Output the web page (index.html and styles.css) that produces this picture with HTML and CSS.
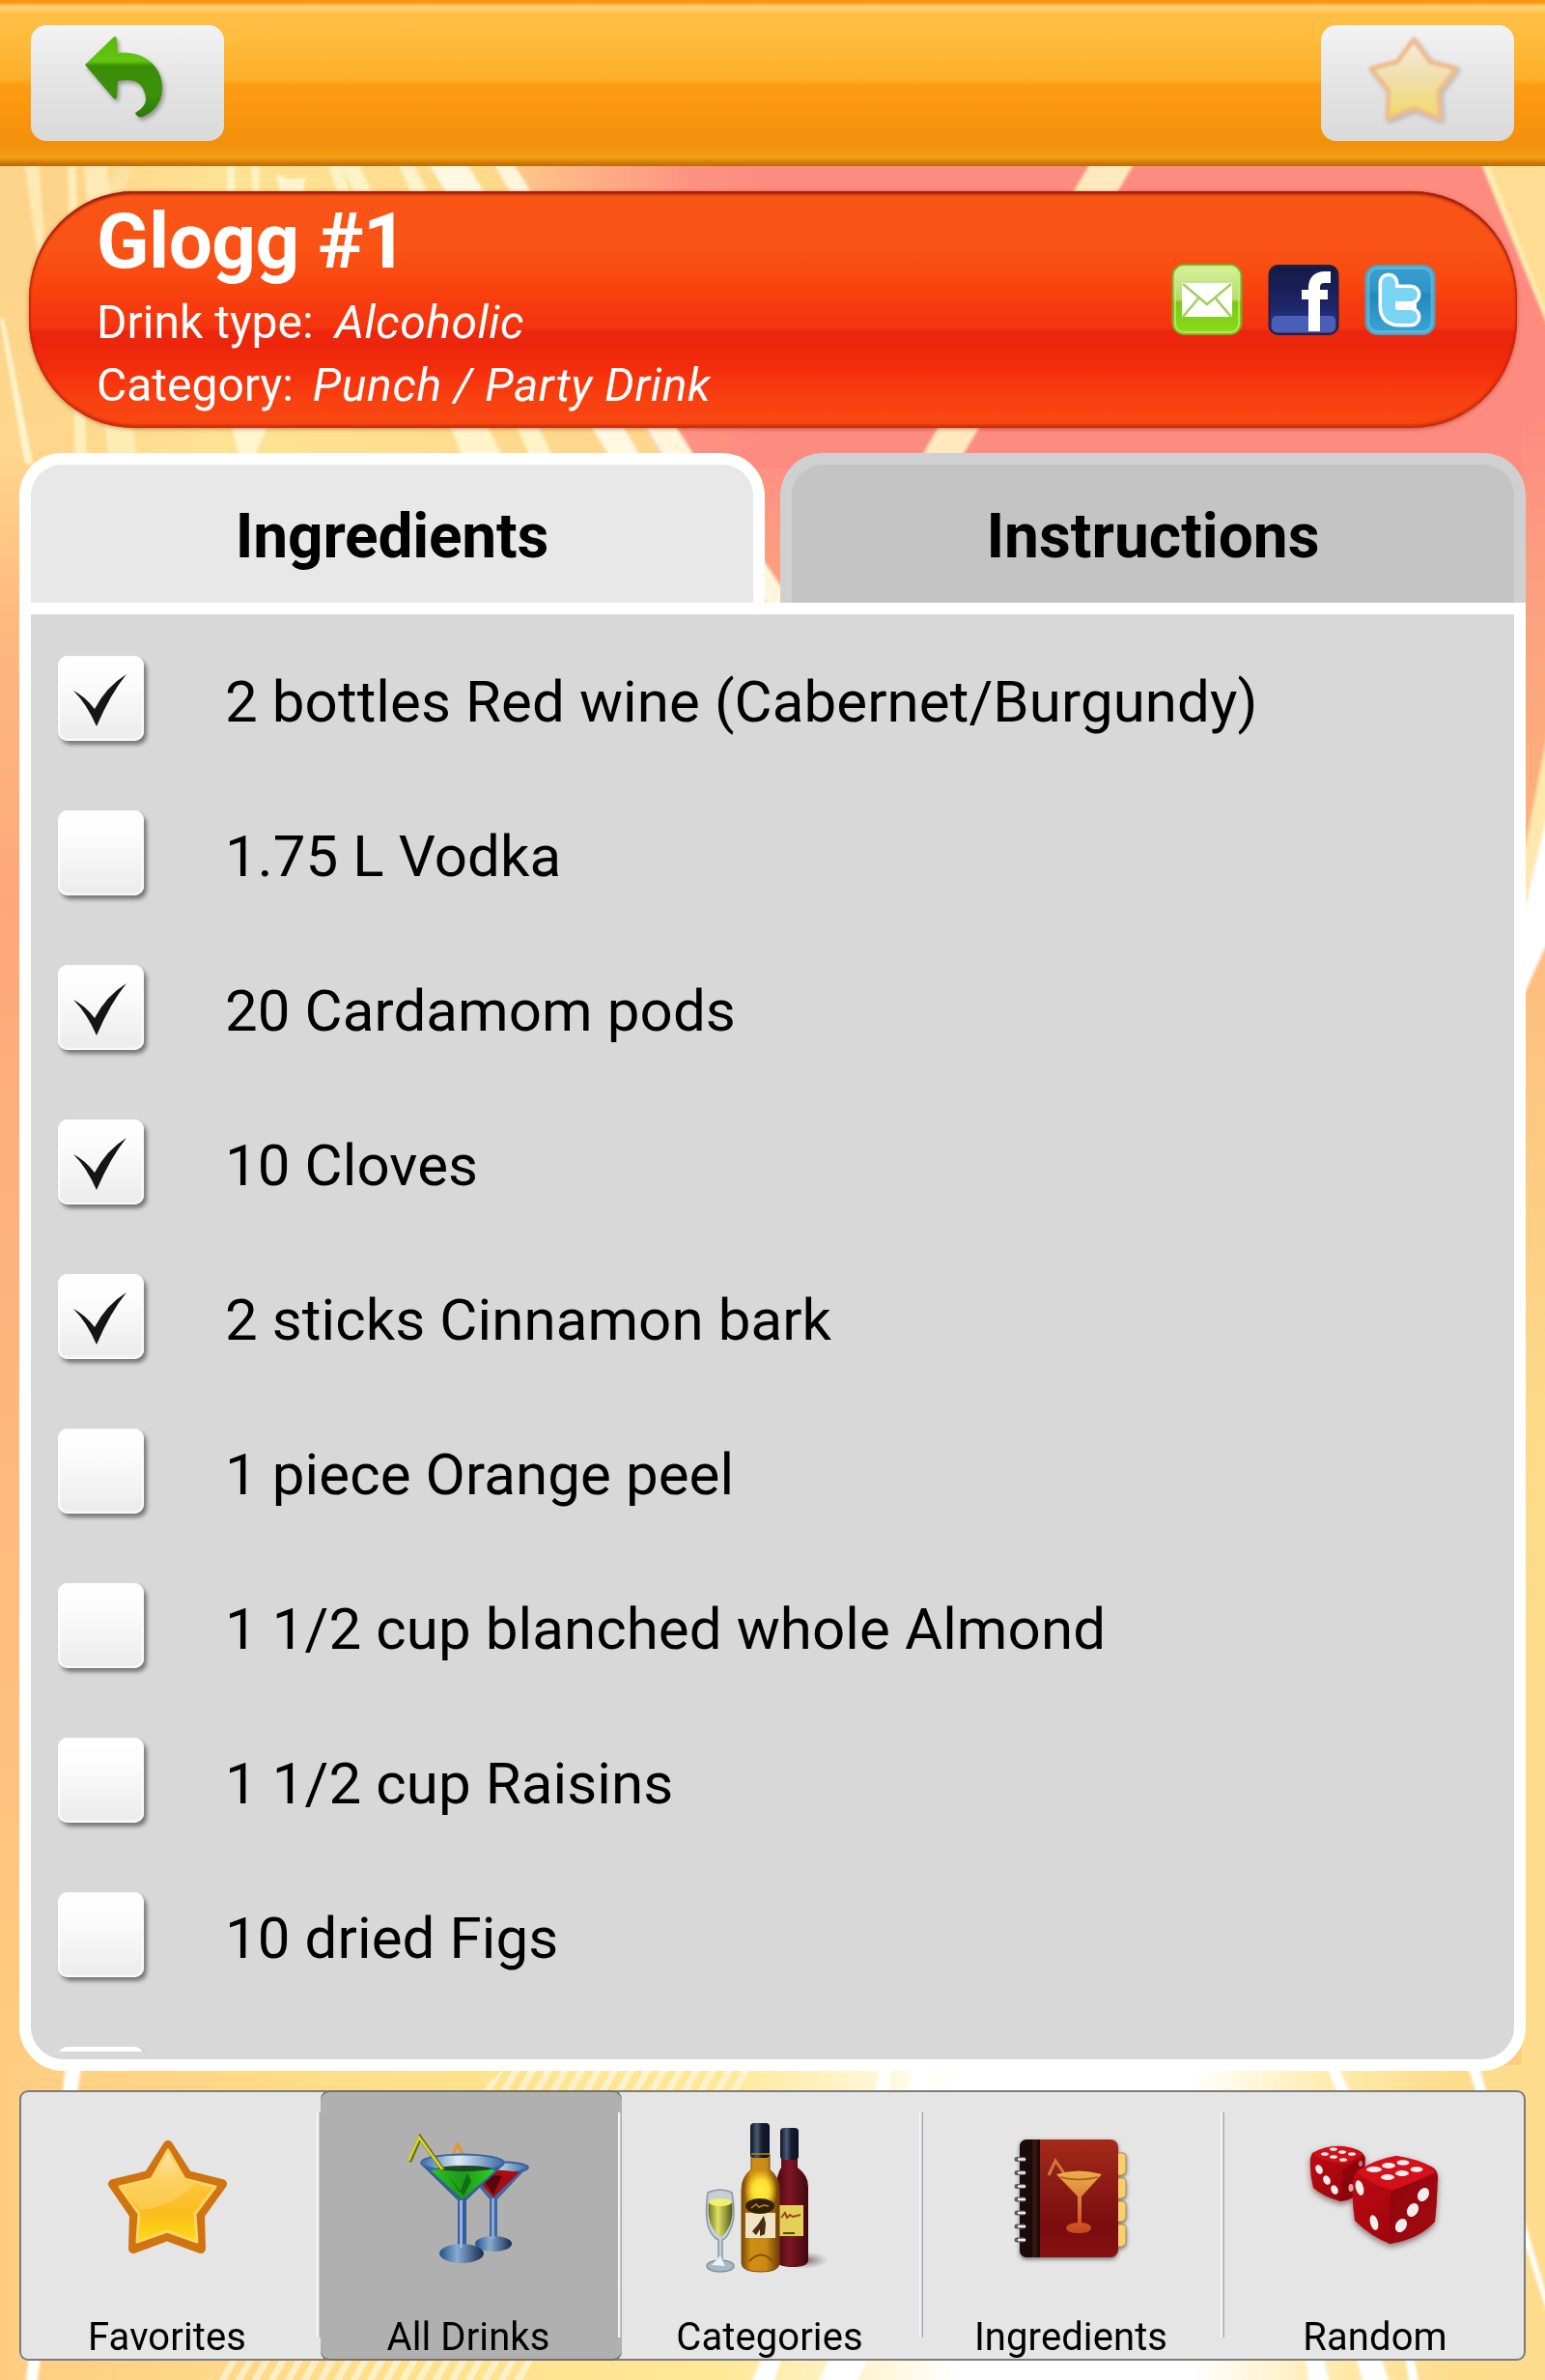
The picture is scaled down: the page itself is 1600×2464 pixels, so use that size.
FILE: index.html
```html
<!DOCTYPE html>
<html lang="en">
<head>
<meta charset="utf-8">
<title>Glogg #1</title>
<link rel="stylesheet" href="styles.css">
</head>
<body>
<svg class="backdrop" viewBox="0 0 1600 2464" preserveAspectRatio="none" aria-hidden="true">
  <defs>
    <linearGradient id="warm" x1="0" y1="0" x2="0" y2="1">
      <stop offset=".07" stop-color="#fdd38a"/><stop offset=".19" stop-color="#fed68c"/><stop offset=".26" stop-color="#feb97e"/><stop offset=".38" stop-color="#fea87a"/><stop offset=".6" stop-color="#feb77c"/><stop offset=".86" stop-color="#fecc80"/><stop offset="1" stop-color="#fed88a"/>
    </linearGradient>
    <linearGradient id="glow" x1="0" y1="0" x2="1" y2="0">
      <stop offset="0" stop-color="#ffe696" stop-opacity="0"/><stop offset=".3" stop-color="#ffe696" stop-opacity=".8"/><stop offset=".7" stop-color="#ffe08e" stop-opacity=".7"/><stop offset="1" stop-color="#ffe08e" stop-opacity="0"/>
    </linearGradient>
    <linearGradient id="pinkX" gradientUnits="userSpaceOnUse" x1="490" y1="0" x2="790" y2="0">
      <stop offset="0" stop-color="#fba583" stop-opacity=".1"/><stop offset=".4" stop-color="#fda084" stop-opacity=".7"/><stop offset=".75" stop-color="#fe9282"/><stop offset="1" stop-color="#fe8b80"/>
    </linearGradient>
    <linearGradient id="right" x1="0" y1="0" x2="0" y2="1">
      <stop offset="0" stop-color="#fe8b80"/><stop offset=".2" stop-color="#fe8b80"/><stop offset=".28" stop-color="#fb9f80"/><stop offset=".38" stop-color="#fdae7c"/><stop offset=".52" stop-color="#fdc680"/><stop offset=".7" stop-color="#fddb8b"/><stop offset="1" stop-color="#fddc8e"/>
    </linearGradient>
    <linearGradient id="floor" x1="0" y1="0" x2="1" y2="0">
      <stop offset="0" stop-color="#ffcd82"/><stop offset=".1" stop-color="#ffd487"/><stop offset=".25" stop-color="#ffe08a"/><stop offset=".47" stop-color="#ffe898"/><stop offset=".56" stop-color="#fff5d2"/><stop offset=".62" stop-color="#fff"/><stop offset=".77" stop-color="#fff"/><stop offset=".87" stop-color="#ffe9a8"/><stop offset=".94" stop-color="#fddc8c"/><stop offset="1" stop-color="#fddc8e"/>
    </linearGradient>
    <linearGradient id="gapFill" x1="0" y1="0" x2="0" y2="1"><stop offset="0" stop-color="#fe9182"/><stop offset="1" stop-color="#fba47f"/></linearGradient>
    <pattern id="hatch" width="17" height="40" patternUnits="userSpaceOnUse" patternTransform="skewX(-30)"><rect width="8" height="40" fill="#fff" opacity=".5"/></pattern>
    <filter id="soft"><feGaussianBlur stdDeviation="1.6"/></filter>
  </defs>
  <rect width="1600" height="2464" fill="url(#warm)"/>
  <rect x="60" y="0" width="560" height="600" fill="url(#glow)"/>
  <polygon points="480,100 1600,100 1600,700 810,700" fill="url(#pinkX)"/>
  <rect x="780" y="485" width="40" height="150" fill="url(#gapFill)"/>
  <rect x="1576" y="0" width="24" height="2140" fill="url(#right)"/>
  <rect y="2138" width="1600" height="326" fill="url(#floor)"/>
  <g filter="url(#soft)" fill="#fff6cf">
    <polygon points="24,160 40,160 50,300 44,300" opacity=".6"/>
    <polygon points="0,330 4,330 34,480 26,480"/>
    <polygon points="70,160 78,160 90,480 78,480" opacity=".7"/>
    <polygon points="86,160 110,160 142,480 112,480" opacity=".6"/>
    <polygon points="124,160 142,160 124,210 108,210" opacity=".3"/>
    <polygon points="235,160 243,160 243,210 235,210" opacity=".9"/>
    <polygon points="260,160 268,160 268,210 262,210" opacity=".9"/>
    <polygon points="286,180 300,186 316,184 314,200 290,200"/>
    <polygon points="240,440 278,440 262,475 248,475"/>
    <polygon points="335,160 352,160 362,200 350,200" opacity=".8"/>
    <polygon points="350,160 366,160 524,480 482,480" opacity=".9"/>
    <polygon points="408,160 424,160 576,480 552,480" opacity=".9"/>
    <polygon points="438,160 478,160 668,480 636,480" fill="#fff9e2"/>
    <polygon points="506,160 526,160 724,480 812,612 812,650 790,620 690,480" fill="#fff6dc"/>
    <polygon points="1134,160 1180,160 992,480 950,480" fill="#ffe9bd"/>
    <polygon points="1530,160 1610,160 1610,350" fill="#ffdc94"/>
    <polygon points="1530,160 1538,160 1610,345 1610,356" fill="#ffedae"/>
    <polygon points="1610,720 1575,900 1575,1040 1610,950" fill="#ffe7ae"/>
    <polygon points="1610,810 1575,960 1575,1036 1610,960" fill="#fff"/>
    <polygon points="68,2140 84,2140 38,2470 26,2470" fill="#fff"/>
    <polygon points="1374,2140 1386,2140 1400,2170 1386,2170" fill="#fff"/>
    <polygon points="1520,2140 1532,2140 1610,2405 1604,2400" fill="#fff"/>
    <polygon points="1352,2440 1370,2440 1378,2470 1356,2470" fill="#fff"/>
    <polygon points="1404,2440 1430,2440 1440,2470 1412,2470" fill="#fff"/>
    <polygon points="1455,2440 1464,2440 1470,2470 1460,2470" fill="#fff"/>
    <polygon points="912,2140 922,2140 922,2170 905,2170" fill="#fff"/>
    <polygon points="945,2140 965,2140 965,2170 938,2170" fill="#fff"/>
    <polygon points="790,2440 810,2440 800,2470 776,2470" fill="#fff"/>
    <polygon points="860,2440 900,2440 885,2470 845,2470" fill="#fff"/>
  </g>
  <polygon points="520,2144 786,2144 770,2170 490,2170" fill="url(#hatch)"/>
  <polygon points="240,2440 560,2440 545,2464 215,2464" fill="url(#hatch)"/>
</svg>

<header class="topbar">
  <button class="bar-btn" aria-label="Back">
    <svg viewBox="32 26 200 120">
      <defs><linearGradient id="arrow" x1="0" y1="38" x2="0" y2="122" gradientUnits="userSpaceOnUse"><stop offset="0" stop-color="#5db50f"/><stop offset=".3" stop-color="#62c60e"/><stop offset=".36" stop-color="#3a8d07"/><stop offset=".7" stop-color="#3d910b"/><stop offset="1" stop-color="#277a03"/></linearGradient></defs>
      <path class="arrow" d="M88 67 L117 39 Q120 36 121 40 L122 55 C147 52 168 67 168 91 C168 107 158 117 147 121 Q142 122 140 117 C149 111 153 106 150 97 C147 84 137 81 122 84 L121 100 Q120 105 116 100 Z" fill="url(#arrow)"/>
    </svg>
  </button>
  <button class="bar-btn" aria-label="Favorite">
    <svg viewBox="1368 26 200 120">
      <defs><linearGradient id="pale" x1="0" y1="0" x2="0" y2="1"><stop offset="0" stop-color="#f4ece0"/><stop offset=".5" stop-color="#f0deaa"/><stop offset="1" stop-color="#f2da62"/></linearGradient></defs>
      <path class="star-shadow" d="M1464 41 L1481 64 L1508 71 L1490 94 L1491 123 L1464 112 L1437 123 L1438 94 L1420 71 L1447 64 Z" fill="url(#pale)" stroke="#efbd90" stroke-width="5" stroke-linejoin="round"/>
    </svg>
  </button>
</header>

<section class="banner">
  <div class="drink">
    <h1 class="drink-name">Glogg #1</h1>
    <p class="meta"><span>Drink type:</span><em class="type">Alcoholic</em></p>
    <p class="meta"><span>Category:</span><em class="cat">Punch / Party Drink</em></p>
  </div>
  <div class="share">
    <svg viewBox="0 0 74 74">
      <defs><linearGradient id="lime" x1="0" y1="0" x2="0" y2="1"><stop offset="0" stop-color="#d9f3a0"/><stop offset=".5" stop-color="#b4dc6c"/><stop offset=".54" stop-color="#7bc814"/><stop offset="1" stop-color="#88dc1c"/></linearGradient></defs>
      <rect x="1.5" y="1" width="71" height="72" rx="12" fill="url(#lime)" stroke="#7fae22" stroke-width="2"/>
      <rect x="4" y="4" width="66" height="67" rx="9" fill="none" stroke="#c8f07a" stroke-width="2" opacity=".7"/>
      <rect x="11" y="20" width="52" height="35" fill="#fff"/>
      <path d="M12 21 L37 42 L62 21 M12 55 L28 36 M62 55 L46 36" fill="none" stroke="#a3cf5c" stroke-width="2.6"/>
    </svg>
    <svg viewBox="0 0 74 74">
      <defs><linearGradient id="navy" x1="0" y1="0" x2="0" y2="1"><stop offset="0" stop-color="#141a45"/><stop offset=".5" stop-color="#1b2260"/><stop offset="1" stop-color="#2b3b98"/></linearGradient></defs>
      <rect x="1.5" y="2" width="71" height="71" rx="9" fill="url(#navy)" stroke="#22203f" stroke-width="2"/>
      <rect x="4" y="54" width="66" height="17" rx="5" fill="#4a5fb8"/>
      <path d="M48 70 V25 Q48 14 59 14 H65" fill="none" stroke="#fff" stroke-width="12"/>
      <path d="M35 32 H62" fill="none" stroke="#fff" stroke-width="10"/>
    </svg>
    <svg viewBox="0 0 74 74">
      <defs><linearGradient id="sky" x1="0" y1="0" x2="0" y2="1"><stop offset="0" stop-color="#3a9fd0"/><stop offset=".38" stop-color="#2f93c6"/><stop offset=".42" stop-color="#2488bd"/><stop offset="1" stop-color="#3aa4d4"/></linearGradient></defs>
      <rect x="1.5" y="2" width="71" height="71" rx="12" fill="url(#sky)" stroke="#5a9db8" stroke-width="2"/>
      <rect x="4" y="4.500" width="66" height="66" rx="10" fill="none" stroke="#62bfe2" stroke-width="3" opacity=".7"/>
      <g fill="none" stroke-linecap="round" stroke-linejoin="round">
        <path d="M25 20 V44 Q25 55 36 55 H48 M27 32 H48" stroke="#fff" stroke-width="21"/>
        <path d="M25 20 V44 Q25 55 36 55 H48 M27 32 H48" stroke="#7ad4f4" stroke-width="14"/>
        <path d="M35 43.500 H54" stroke="#fff" stroke-width="8" stroke-linecap="butt"/>
      </g>
    </svg>
  </div>
</section>

<main class="recipe">
  <div class="tabs">
    <button class="tab active">Ingredients</button>
    <button class="tab">Instructions</button>
  </div>
  <div class="panel">
    <ul class="list">
      <li class="row"><span class="box checked"><svg viewBox="0 0 88 88"><path d="M16 36 Q28 42 38 55 Q50 32 71 19 Q54 40 40 73 Q30 50 16 36 Z"/></svg></span><span>2 bottles Red wine (Cabernet/Burgundy)</span></li>
      <li class="row"><span class="box"></span><span>1.75 L Vodka</span></li>
      <li class="row"><span class="box checked"><svg viewBox="0 0 88 88"><path d="M16 36 Q28 42 38 55 Q50 32 71 19 Q54 40 40 73 Q30 50 16 36 Z"/></svg></span><span>20 Cardamom pods</span></li>
      <li class="row"><span class="box checked"><svg viewBox="0 0 88 88"><path d="M16 36 Q28 42 38 55 Q50 32 71 19 Q54 40 40 73 Q30 50 16 36 Z"/></svg></span><span>10 Cloves</span></li>
      <li class="row"><span class="box checked"><svg viewBox="0 0 88 88"><path d="M16 36 Q28 42 38 55 Q50 32 71 19 Q54 40 40 73 Q30 50 16 36 Z"/></svg></span><span>2 sticks Cinnamon bark</span></li>
      <li class="row"><span class="box"></span><span>1 piece Orange peel</span></li>
      <li class="row"><span class="box"></span><span>1 1/2 cup blanched whole Almond</span></li>
      <li class="row"><span class="box"></span><span>1 1/2 cup Raisins</span></li>
      <li class="row"><span class="box"></span><span>10 dried Figs</span></li>
      <li class="row"><span class="box"></span></li>
    </ul>
  </div>
</main>

<nav class="nav">
  <a class="item">
    <svg viewBox="20 2166 312 230">
      <defs><linearGradient id="gold" x1="0" y1="0" x2="0" y2="1"><stop offset="0" stop-color="#fde0a0"/><stop offset=".35" stop-color="#fdc53a"/><stop offset=".7" stop-color="#fbbd1e"/><stop offset="1" stop-color="#ffdc10"/></linearGradient></defs>
      <path d="M174 2221 L194 2252 L230 2261 L207 2293 L208 2328 L173 2315 L138 2328 L139 2293 L117 2261 L154 2252 Z" fill="#d97c12" stroke="#cf7410" stroke-width="10" stroke-linejoin="round"/>
      <path d="M174 2226 L191 2256 L223 2264 L202 2292 L204 2321 L173 2310 L142 2321 L144 2292 L124 2264 L157 2256 Z" fill="url(#gold)" stroke="#fbd565" stroke-width="3" stroke-linejoin="round"/>
      <path d="M126 2265 L158 2258 L174 2230 L190 2258 L202 2261 Q180 2284 146 2288 Z" fill="#fff" opacity=".18"/>
    </svg>
    <span>Favorites</span>
  </a>
  <a class="item selected">
    <svg viewBox="332 2166 312 230">
      <defs>
        <linearGradient id="steel" x1="0" y1="0" x2="1" y2="0"><stop offset="0" stop-color="#3d6fa8"/><stop offset=".45" stop-color="#dcebf6"/><stop offset="1" stop-color="#3a68a6"/></linearGradient>
        <linearGradient id="base" x1="0" y1="0" x2="1" y2="0"><stop offset="0" stop-color="#274f88"/><stop offset=".4" stop-color="#86acd2"/><stop offset="1" stop-color="#16294c"/></linearGradient>
        <linearGradient id="lime2" x1="0" y1="0" x2="1" y2="0"><stop offset="0" stop-color="#2cc424"/><stop offset=".5" stop-color="#1b9a17"/><stop offset="1" stop-color="#35cf2a"/></linearGradient>
      </defs>
      <path d="M467 2234 L474 2220 L481 2234" fill="none" stroke="#e8942a" stroke-width="3"/>
      <path d="M478 2243 L547 2243 L515 2277 V2318 H507 V2277 Z" fill="#3f689e"/>
      <ellipse cx="513" cy="2244" rx="34" ry="6" fill="url(#steel)" stroke="#345f9b" stroke-width="2"/>
      <path d="M487 2249 Q512 2244 538 2249 L511 2275 Z" fill="#a90d14"/><path d="M496 2251 L520 2253 L511 2272 Z" fill="#5c0508"/>
      <ellipse cx="511" cy="2323" rx="19" ry="8" fill="url(#base)"/>
      <path d="M509 2276 h3 v42 h-3z" fill="#86a9d4"/>
      <path d="M436 2241 L522 2241 L483 2278 V2326 H474 V2278 Z" fill="#355f9a"/>
      <ellipse cx="479" cy="2239" rx="43" ry="8.500" fill="url(#steel)" stroke="#3b67a3" stroke-width="2"/>
      <path d="M446 2247 Q479 2240 513 2247 L479 2277 Z" fill="url(#lime2)"/>
      <ellipse cx="481" cy="2245" rx="27" ry="3" fill="#1d4a20"/>
      <path d="M464 2252 L476 2270 L484 2250 L488 2258 L480 2273 Z" fill="#126d10"/>
      <path d="M424 2238 L435 2213 L459 2247" fill="none" stroke="#6c7016" stroke-width="4.500"/><path d="M423 2237 L434 2213 L458 2246" fill="none" stroke="#d9d62c" stroke-width="2.500"/>
      <ellipse cx="478" cy="2333" rx="23" ry="10" fill="url(#base)"/>
      <path d="M476 2278 h3 v49 h-3z" fill="#94b5dc"/>
    </svg>
    <span>All Drinks</span>
  </a>
  <a class="item">
    <svg viewBox="644 2166 312 230">
      <defs>
        <linearGradient id="amber" x1="0" y1="0" x2="1" y2="0"><stop offset="0" stop-color="#7a4806"/><stop offset=".25" stop-color="#d08e12"/><stop offset=".65" stop-color="#c98a16"/><stop offset="1" stop-color="#6c3c05"/></linearGradient>
        <linearGradient id="claret" x1="0" y1="0" x2="1" y2="0"><stop offset="0" stop-color="#4a0812"/><stop offset=".4" stop-color="#7e1622"/><stop offset="1" stop-color="#400610"/></linearGradient>
        <linearGradient id="cap" x1="0" y1="0" x2="1" y2="0"><stop offset="0" stop-color="#0c1220"/><stop offset=".35" stop-color="#4b5a76"/><stop offset=".6" stop-color="#151c2e"/><stop offset="1" stop-color="#0c1220"/></linearGradient>
        <radialGradient id="shine"><stop offset="0" stop-color="#ffec40"/><stop offset=".5" stop-color="#fde030"/><stop offset="1" stop-color="#f8d820" stop-opacity="0"/></radialGradient>
        <linearGradient id="fizz" x1="0" y1="0" x2="1" y2="0"><stop offset="0" stop-color="#74761a"/><stop offset=".4" stop-color="#dfe168"/><stop offset="1" stop-color="#55581a"/></linearGradient>
        <radialGradient id="shade"><stop offset="0" stop-color="#402028" stop-opacity=".7"/><stop offset="1" stop-color="#806060" stop-opacity="0"/></radialGradient>
      </defs>
      <ellipse cx="832" cy="2340" rx="26" ry="9" fill="url(#shade)"/>
      <path d="M809 2230 H826 V2244 Q837 2252 837 2264 V2340 Q837 2347 821 2347 Q804 2347 804 2340 V2264 Q804 2252 809 2244 Z" fill="url(#claret)"/>
      <rect x="808" y="2203" width="19" height="33" rx="4" fill="url(#cap)"/>
      <rect x="807" y="2283" width="25" height="32" fill="#e4cf58"/><path d="M809 2296 l4 -5 2 5 3 -3 3 2 8 -2" fill="none" stroke="#a04028" stroke-width="2"/><path d="M811 2312h12" stroke="#574318" stroke-width="2"/>
      <path d="M778 2230 H797 V2246 Q807 2254 807 2267 V2343 Q807 2352 788 2352 Q768 2352 768 2343 V2267 Q768 2254 778 2246 Z" fill="url(#amber)" stroke="#7a4a0a" stroke-width="1"/>
      <ellipse cx="788" cy="2268" rx="17" ry="22" fill="url(#shine)"/>
      <rect x="777" y="2198" width="20" height="36" rx="4" fill="url(#cap)"/><path d="M778 2230 H797" stroke="#b98524" stroke-width="1.500"/>
      <rect x="772" y="2291" width="31" height="26" fill="#efe4c4"/>
      <ellipse cx="787" cy="2284" rx="15" ry="8" fill="#35200a"/><path d="M778 2286 l5 -4 3 3 5 -2 5 1" fill="none" stroke="#bb8733" stroke-width="1.500"/>
      <path d="M791 2294 L785 2303 L779 2310 L783 2314 L787 2308 L787 2315 L792 2313 L793 2302 Z" fill="#4b2c12"/>
      <path d="M776 2341 Q788 2328 800 2341" fill="none" stroke="#8d4d0c" stroke-width="2"/>
      <path d="M733 2270 Q746 2264 758 2270 Q762 2292 758 2304 Q753 2318 748 2319 V2341 H744 V2319 Q737 2316 733 2304 Q730 2290 733 2270 Z" fill="#c5d0d8" stroke="#8797a2" stroke-width="1.500"/>
      <path d="M734 2279 Q746 2275 758 2279 Q761 2304 747 2316 Q731 2306 734 2279 Z" fill="url(#fizz)"/><ellipse cx="746" cy="2280" rx="12" ry="4" fill="#eff06e"/>
      <ellipse cx="746" cy="2346" rx="14" ry="6" fill="#a9bac6" stroke="#7d92a0" stroke-width="1.500"/><path d="M737 2345 L746 2335 L751 2346Z" fill="#eaf1f5"/>
    </svg>
    <span>Categories</span>
  </a>
  <a class="item">
    <svg viewBox="956 2166 312 230">
      <defs><linearGradient id="cover" x1="0" y1="0" x2="0" y2="1"><stop offset="0" stop-color="#a52a18"/><stop offset=".35" stop-color="#8e1c16"/><stop offset=".75" stop-color="#7a0c0f"/><stop offset="1" stop-color="#8a1010"/></linearGradient><linearGradient id="martini" x1="0" y1="0" x2="0" y2="1"><stop offset="0" stop-color="#eab04a"/><stop offset="1" stop-color="#c9441c"/></linearGradient></defs>
      <g class="book">
        <path d="M1150 2229 h13 q3 0 3 3 v17 l-4 3 h-12 z M1150 2255 h13 q3 0 3 3 v15 l-4 3 h-12 z M1150 2279 h13 q3 0 3 3 v15 l-4 3 h-12 z M1150 2303 h13 q3 0 3 3 v17 l-4 3 h-12 z" fill="#f8d070" stroke="#b98a42" stroke-width="1"/>
        <rect x="1056" y="2215" width="102" height="122" rx="8" fill="url(#cover)"/>
        <path d="M1064 2215 H1077 V2337 H1064 Q1056 2337 1056 2329 V2223 Q1056 2215 1064 2215 Z" fill="#1c0a08"/><path d="M1069 2215 h5 v122 h-5z" fill="#341511"/>
      </g>
      <g fill="none" stroke="#5a5a5a" stroke-width="5" stroke-linecap="round"><path d="M1053 2235.500h7M1053 2249.500h7M1053 2263.500h7M1053 2277h7M1053 2291h7M1053 2305h7M1053 2319h7"/><path stroke="#eee" stroke-width="2.500" d="M1055 2235.500h6M1055 2249.500h6M1055 2263.500h6M1055 2277h6M1055 2291h6M1055 2305h6M1055 2319h6"/></g>
      <path d="M1086 2252 L1093 2237 L1102 2250" fill="none" stroke="#d07a3a" stroke-width="3"/>
      <path d="M1094 2251 Q1117 2244 1141 2251 L1120 2274 V2301 Q1130 2302 1130 2307 Q1129 2312 1117 2312 Q1105 2312 1104 2307 Q1104 2302 1116 2301 V2274 Z" fill="url(#martini)"/>
      <path d="M1098 2254 Q1117 2259 1137 2254" fill="none" stroke="#b3561f" stroke-width="1.500"/>
    </svg>
    <span>Ingredients</span>
  </a>
  <a class="item">
    <svg viewBox="1268 2166 312 230">
      <defs><linearGradient id="dieL" x1="0" y1="0" x2="1" y2="1"><stop offset="0" stop-color="#c40a12"/><stop offset="1" stop-color="#8f040a"/></linearGradient><linearGradient id="dieR" x1="0" y1="0" x2="1" y2="1"><stop offset="0" stop-color="#8c050b"/><stop offset="1" stop-color="#a80a12"/></linearGradient></defs>
      <g class="dice">
        <path d="M1359 2229 Q1378 2219 1396 2223 Q1413 2226 1414 2235 L1412 2266 Q1400 2279 1388 2279 Q1370 2274 1360 2265 Q1356 2250 1357 2234 Z" fill="url(#dieL)"/>
        <path d="M1359 2230 Q1378 2219 1396 2223 L1412 2230 Q1396 2241 1389 2240 Q1372 2238 1359 2230Z" fill="#ce1018"/>
        <path d="M1391 2246 Q1400 2240 1413 2233 L1411 2266 Q1403 2276 1388 2279 Z" fill="#8b050b"/>
        <path d="M1408 2247 Q1425 2236 1446 2232 Q1468 2235 1484 2244 Q1490 2248 1489 2257 L1486 2300 Q1470 2318 1440 2323 Q1420 2316 1403 2299 Q1400 2280 1401 2260 Q1402 2250 1408 2247 Z" fill="url(#dieL)"/>
        <path d="M1405 2248 Q1425 2235 1446 2232 Q1470 2235 1487 2248 Q1474 2260 1440 2267 Q1418 2261 1405 2248 Z" fill="#d4101a"/>
        <path d="M1440 2272 Q1444 2266 1462 2260 Q1478 2253 1487 2249 Q1490 2270 1486 2298 Q1472 2316 1438 2323 Z" fill="url(#dieR)"/>
      </g>
      <g fill="#f6eeee">
        <ellipse cx="1372" cy="2230" rx="4" ry="1.800"/><ellipse cx="1381" cy="2225" rx="4" ry="1.800"/><ellipse cx="1390" cy="2228" rx="4" ry="1.800"/><ellipse cx="1400" cy="2230" rx="4" ry="1.800"/><ellipse cx="1381" cy="2233" rx="4" ry="1.800"/><ellipse cx="1391" cy="2236" rx="4" ry="1.800"/>
        <ellipse cx="1366" cy="2246" rx="3.500" ry="5" transform="rotate(-25 1366 2246)"/><ellipse cx="1374" cy="2257" rx="3.500" ry="5" transform="rotate(-25 1374 2257)"/><ellipse cx="1382" cy="2267" rx="3.500" ry="5" transform="rotate(-25 1382 2267)"/>
        <ellipse cx="1399" cy="2265" rx="2.500" ry="4" opacity=".7"/><ellipse cx="1409" cy="2240" rx="2" ry="3" opacity=".5"/>
        <ellipse cx="1423" cy="2246" rx="8" ry="3"/><ellipse cx="1438" cy="2242" rx="7" ry="3"/><ellipse cx="1453" cy="2239" rx="6.500" ry="2.800"/><ellipse cx="1437" cy="2254" rx="7" ry="3"/><ellipse cx="1452" cy="2250" rx="7" ry="3"/><ellipse cx="1467" cy="2246" rx="6.500" ry="2.800"/>
        <ellipse cx="1408" cy="2265" rx="4" ry="8" transform="rotate(-15 1408 2265)"/><ellipse cx="1423" cy="2301" rx="4" ry="8" transform="rotate(-15 1423 2301)"/>
        <ellipse cx="1474" cy="2272" rx="5.500" ry="7.500" transform="rotate(30 1474 2272)"/><ellipse cx="1463" cy="2288" rx="5.500" ry="7.500" transform="rotate(30 1463 2288)"/><ellipse cx="1451" cy="2304" rx="5.500" ry="7.500" transform="rotate(30 1451 2304)"/>
      </g>
    </svg>
    <span>Random</span>
  </a>
</nav>
</body>
</html>
```
FILE: styles.css
```css
* { box-sizing: border-box; margin: 0; padding: 0; }
body {
  position: relative;
  width: 1600px;
  height: 2464px;
  overflow: hidden;
  display: flex;
  flex-direction: column;
  font-family: Roboto, "Noto Sans", sans-serif;
  color: #000;
}
button { border: 0; font: inherit; color: inherit; }
.backdrop { position: absolute; inset: 0; width: 1600px; height: 2464px; z-index: -1; }

.topbar {
  height: 172px;
  flex: none;
  display: flex;
  justify-content: space-between;
  align-items: flex-start;
  padding: 26px 32px 0;
  background: linear-gradient(to bottom, #f5950f 0, #f89a14 3px, #ffd070 6px, #ffcf6c 9px, #ffbf46 14px, #ffbe42 30px, #fdb02a 82px, #fd9c12 88px, #fb980f 110px, #f2900c 150px, #f39a12 159px, #f79e14 163px, #c97808 169px, #b86c08 172px);
}
.bar-btn {
  width: 200px;
  height: 120px;
  border-radius: 16px;
  background: linear-gradient(#f3f3f3, #e4e4e4 50%, #dadada);
}
.bar-btn svg { display: block; width: 200px; height: 120px; }
.arrow { filter: drop-shadow(2px 3px 2px rgba(0, 0, 0, .35)) blur(.6px); }
.star-shadow { filter: drop-shadow(2px 2px 2px rgba(0, 0, 0, .2)) blur(1px); }

.banner {
  flex: none;
  margin: 26px 29px 0 30px;
  height: 245px;
  border-radius: 108px / 112px;
  display: flex;
  justify-content: space-between;
  padding: 0 84px 0 70px;
  color: #fff;
  background: linear-gradient(#f95517 0, #f95315 60px, #f94b11 85px, #f73c0e 115px, #f4340e 142px, #ec260c 145px, #ec260c 158px, #f42c0c 182px, #f93f10 212px, #f84812 240px);
  box-shadow: inset 0 3px 3px #9c1c0a, inset 0 -3px 3px #c92c08, inset 0 0 3px #b02408, 0 1px 4px rgba(110, 30, 10, .5);
}
.drink-name { font-size: 80px; line-height: 94px; font-weight: 700; margin-top: 5px; letter-spacing: -.5px; }
.meta { font-size: 48px; line-height: 65px; white-space: nowrap; }
.meta:nth-child(2) { margin-top: 4px; }
.type { margin-left: 22px; letter-spacing: .5px; }
.cat { margin-left: 20px; letter-spacing: .6px; }
.share { display: flex; gap: 26px; padding-top: 75px; }
.share svg { width: 74px; height: 74px; filter: blur(.4px); }

.recipe { flex: none; margin: 26px 20px 0; }
.tabs { display: grid; grid-template-columns: 772px 772px; gap: 16px; height: 155px; }
.tab {
  border: 12px solid #d0d0d0;
  border-bottom: 0;
  border-radius: 44px 44px 0 0;
  background: #c4c4c4;
  font-size: 64px;
  font-weight: 700;
  line-height: 75px;
  padding-top: 5px;
}
.tab.active { border-color: #fff; background: #e8e8e8; letter-spacing: -.2px; }
.panel {
  height: 1520px;
  border: 12px solid #fff;
  border-radius: 0 0 46px 46px;
  background: #d8d8d8;
  padding-top: 10px;
}
.list { list-style: none; height: 1478px; overflow: hidden; }
.row { height: 160px; display: flex; align-items: center; padding-left: 28px; gap: 84px; font-size: 60px; letter-spacing: .1px; white-space: nowrap; }
.box {
  width: 89px;
  height: 88px;
  flex: none;
  margin-top: -7px;
  border-radius: 10px;
  background: linear-gradient(#fff, #fcfcfc 30%, #ebebeb);
  box-shadow: inset 0 0 2px 2px #fdfdfd, 3px 4px 4px rgba(0, 0, 0, .45);
}
.box svg { display: block; fill: #151515; width: 88px; height: 88px; }

.nav {
  flex: none;
  margin: 20px 20px 0;
  height: 280px;
  display: grid;
  grid-template-columns: repeat(5, 1fr);
  border-radius: 9px;
  background: #e5e5e5;
  box-shadow: inset 0 0 0 2px #7c7c7c;
}
.item {
  display: flex;
  flex-direction: column;
  align-items: center;
  padding-top: 2px;
  font-size: 40px;
  line-height: 47px;
  letter-spacing: .1px;
  border-radius: 9px;
  background: linear-gradient(to right, #fff, #e8edf0 40%, #8e9ba6) no-repeat 308px 23px / 4px 233px;
}
.item:last-child { background: none; }
.item.selected { background-color: #b0b0b0; box-shadow: inset 0 2px #70706c, inset 0 -2px #70706c; }
.item svg { width: 312px; height: 230px; flex: none; filter: blur(.5px); }
.item span { margin-left: -6px; }
.item:last-child span { margin-left: 0; }
.book { filter: drop-shadow(0 2px 2px rgba(0, 0, 0, .5)); }
.dice { filter: drop-shadow(0 3px 3px rgba(60, 0, 0, .5)); }
```
